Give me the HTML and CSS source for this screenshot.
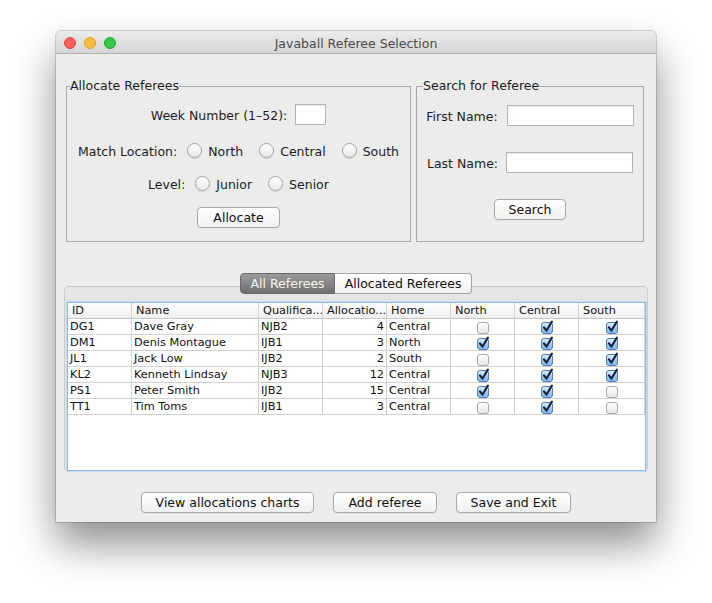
FILE: index.html
```html
<!DOCTYPE html>
<html lang="en">
<head>
<meta charset="utf-8">
<title>Javaball Referee Selection</title>
<link rel="stylesheet" href="styles.css">
</head>
<body>
<svg class="defs" width="0" height="0" aria-hidden="true">
  <defs>
    <linearGradient id="gOn" x1="0" y1="0" x2="0" y2="1">
      <stop offset="0" stop-color="#e2f0fe"/>
      <stop offset="0.5" stop-color="#a8cff7"/>
      <stop offset="1" stop-color="#7db6ef"/>
    </linearGradient>
    <linearGradient id="gOff" x1="0" y1="0" x2="0" y2="1">
      <stop offset="0" stop-color="#ffffff"/>
      <stop offset="1" stop-color="#e6e6e6"/>
    </linearGradient>
    <symbol id="cb-on" viewBox="0 0 14 14">
      <rect x="1.5" y="2.5" width="11" height="11" rx="2.5" fill="url(#gOn)" stroke="#5278ab"/>
      <path d="M3.9 7.4 L6.4 10.7 L11.9 1.6" fill="none" stroke="#17233b" stroke-width="2.1" stroke-linecap="round" stroke-linejoin="round"/>
    </symbol>
    <symbol id="cb-off" viewBox="0 0 14 14">
      <rect x="1.5" y="2.5" width="11" height="11" rx="2.5" fill="url(#gOff)" stroke="#a8a8a8"/>
    </symbol>
  </defs>
</svg>
<div class="desk">
  <div class="window">
    <header class="titlebar">
      <div class="lights">
        <span class="light close"></span>
        <span class="light min"></span>
        <span class="light max"></span>
      </div>
      <div class="title">Javaball Referee Selection</div>
      <div></div>
    </header>
    <main class="content">
      <div class="panels">
        <fieldset class="group alloc">
          <legend>Allocate Referees</legend>
          <div class="row week">
            <span class="lbl">Week Number (1–52):</span>
            <span class="field week-field"></span>
          </div>
          <div class="row loc">
            <span class="lbl">Match Location:</span>
            <span class="opt"><span class="radio"></span>North</span>
            <span class="opt"><span class="radio"></span>Central</span>
            <span class="opt"><span class="radio"></span>South</span>
          </div>
          <div class="row level">
            <span class="lbl">Level:</span>
            <span class="opt"><span class="radio"></span>Junior</span>
            <span class="opt"><span class="radio"></span>Senior</span>
          </div>
          <button class="btn allocate">Allocate</button>
        </fieldset>
        <fieldset class="group search">
          <legend>Search for Referee</legend>
          <div class="row first">
            <span class="lbl">First Name:</span>
            <span class="field name-field"></span>
          </div>
          <div class="row last">
            <span class="lbl">Last Name:</span>
            <span class="field name-field"></span>
          </div>
          <button class="btn search-btn">Search</button>
        </fieldset>
      </div>

      <div class="tabs">
        <span class="tab active">All Referees</span>
        <span class="tab">Allocated Referees</span>
      </div>
      <div class="tabpane">
        <div class="scroll">
          <table class="grid">
            <colgroup>
              <col class="c-id"><col class="c-name"><col class="c-q"><col class="c-a"><col class="c-h"><col class="c-n"><col class="c-c"><col class="c-s">
            </colgroup>
            <thead>
              <tr><th>ID</th><th>Name</th><th>Qualifica...</th><th>Allocatio...</th><th>Home</th><th>North</th><th>Central</th><th>South</th></tr>
            </thead>
            <tbody>
              <tr><td>DG1</td><td>Dave Gray</td><td>NJB2</td><td class="num">4</td><td>Central</td>
                <td class="cb"><svg><use href="#cb-off"/></svg></td><td class="cb"><svg><use href="#cb-on"/></svg></td><td class="cb"><svg><use href="#cb-on"/></svg></td></tr>
              <tr><td>DM1</td><td>Denis Montague</td><td>IJB1</td><td class="num">3</td><td>North</td>
                <td class="cb"><svg><use href="#cb-on"/></svg></td><td class="cb"><svg><use href="#cb-on"/></svg></td><td class="cb"><svg><use href="#cb-on"/></svg></td></tr>
              <tr><td>JL1</td><td>Jack Low</td><td>IJB2</td><td class="num">2</td><td>South</td>
                <td class="cb"><svg><use href="#cb-off"/></svg></td><td class="cb"><svg><use href="#cb-on"/></svg></td><td class="cb"><svg><use href="#cb-on"/></svg></td></tr>
              <tr><td>KL2</td><td>Kenneth Lindsay</td><td>NJB3</td><td class="num">12</td><td>Central</td>
                <td class="cb"><svg><use href="#cb-on"/></svg></td><td class="cb"><svg><use href="#cb-on"/></svg></td><td class="cb"><svg><use href="#cb-on"/></svg></td></tr>
              <tr><td>PS1</td><td>Peter Smith</td><td>IJB2</td><td class="num">15</td><td>Central</td>
                <td class="cb"><svg><use href="#cb-on"/></svg></td><td class="cb"><svg><use href="#cb-on"/></svg></td><td class="cb"><svg><use href="#cb-off"/></svg></td></tr>
              <tr><td>TT1</td><td>Tim Toms</td><td>IJB1</td><td class="num">3</td><td>Central</td>
                <td class="cb"><svg><use href="#cb-off"/></svg></td><td class="cb"><svg><use href="#cb-on"/></svg></td><td class="cb"><svg><use href="#cb-off"/></svg></td></tr>
            </tbody>
          </table>
        </div>
      </div>

      <div class="actions">
        <button class="btn">View allocations charts</button>
        <button class="btn">Add referee</button>
        <button class="btn">Save and Exit</button>
      </div>
    </main>
  </div>
</div>
</body>
</html>
```

FILE: styles.css
```css
* { box-sizing: border-box; }

html, body {
  margin: 0;
  padding: 0;
  background: #ffffff;
}

body {
  font-family: "DejaVu Sans", "Liberation Sans", sans-serif;
  font-size: 12.5px;
  color: #1c1c1c;
}

.defs { display: block; width: 0; height: 0; overflow: hidden; }

.desk {
  padding: 31px 0 0 56px;
  height: 603px;
}

.window {
  width: 600px;
  height: 491px;
  background: #ececec;
  border-radius: 5px 5px 0 0;
  box-shadow: 0 0 0 1px rgba(0, 0, 0, 0.16), 0 22px 42px rgba(0, 0, 0, 0.45);
  display: flex;
  flex-direction: column;
}

/* title bar */
.titlebar {
  height: 23px;
  flex: none;
  display: grid;
  grid-template-columns: 1fr auto 1fr;
  align-items: center;
  background: linear-gradient(#ececec, #d5d5d5);
  border-bottom: 1px solid #b2b2b2;
  border-radius: 5px 5px 0 0;
}
.lights { display: flex; gap: 8px; padding-left: 8px; }
.light { width: 12px; height: 12px; border-radius: 50%; }
.close { background: #fc605c; border: 1px solid #e0443e; }
.min { background: #fdbc40; border: 1px solid #dea123; }
.max { background: #34c84a; border: 1px solid #1aab29; }
.title { color: #4b4b4b; font-size: 12.5px; line-height: 22px; padding-top: 2px; }

/* content */
.content {
  flex: 1;
  display: flex;
  flex-direction: column;
  padding: 24px 0 9px 0;
}

.panels {
  display: flex;
  gap: 5px;
  height: 164px;
  padding-left: 10px;
}

.group {
  margin: 0;
  padding: 0;
  min-width: 0;
  border: 1px solid #a9a9a9;
  display: flex;
  flex-direction: column;
  align-items: center;
}
.group legend {
  margin-left: 3px;
  padding: 0;
  line-height: 16px;
  font-size: 12.5px;
  color: #1c1c1c;
}
.alloc { width: 345px; }
.search { width: 228px; }
.search legend { margin-left: 6px; }

.row {
  display: flex;
  align-items: center;
  height: 21px;
  white-space: nowrap;
}
.lbl { margin-right: 10px; }
.week .lbl { margin-right: 8px; }
.alloc .week { margin-top: 10px; }
.alloc .loc { margin-top: 15px; }
.alloc .level { margin-top: 12px; }
.alloc .allocate { margin-top: 13px; }
.row .lbl, .row .opt { padding-top: 1px; }

.opt { display: flex; align-items: center; }
.opt + .opt { margin-left: 16px; }

.radio {
  width: 15px;
  height: 15px;
  border-radius: 50%;
  border: 1px solid #a2a2a2;
  background: linear-gradient(#ffffff, #e9e9e9);
  box-shadow: 0 1px 1px rgba(0, 0, 0, 0.1);
  margin-right: 6px;
  margin-top: -1px;
}

.field {
  display: block;
  height: 21px;
  background: #ffffff;
  border: 1px solid #b3b3b3;
  box-shadow: inset 0 1px 1px rgba(0, 0, 0, 0.08);
}
.week-field { width: 31px; }
.name-field { width: 127px; }

.search .first { margin-top: 11px; }
.search .first .lbl { margin-right: 9px; }
.search .last { margin-top: 26px; }
.search .last .lbl { margin-right: 8px; }
.search .search-btn { margin-top: 26px; }

.btn {
  height: 21px;
  padding: 0 14px;
  font-family: "DejaVu Sans", "Liberation Sans", sans-serif;
  font-size: 12.5px;
  color: #111111;
  background: linear-gradient(#ffffff, #f0f0f0);
  border: 1px solid #a8a8a8;
  border-radius: 4px;
  box-shadow: 0 1px 0 rgba(0, 0, 0, 0.04);
  white-space: nowrap;
}
.allocate { padding: 0 15px; }

/* tabs */
.tabs {
  margin-top: 31px;
  margin-bottom: -8px;
  display: flex;
  justify-content: center;
  height: 21px;
  position: relative;
  z-index: 1;
}
.tab {
  height: 21px;
  line-height: 19px;
  padding: 0 9.5px;
  font-size: 12.5px;
  color: #111111;
  background: linear-gradient(#ffffff, #f1f1f1);
  border: 1px solid #a2a2a2;
  border-left: none;
  border-radius: 0 4px 4px 0;
}
.tab.active {
  color: #f4f4f4;
  background: linear-gradient(#9a9a9a, #6f6f6f);
  border: 1px solid #6a6a6a;
  border-radius: 4px 0 0 4px;
}

.tabpane {
  margin-left: 8px;
  width: 584px;
  height: 186px;
  border: 1px solid #cacaca;
  border-radius: 5px;
  background: #e5e5e5;
  padding: 15px 1px 1px 2px;
}

.scroll {
  width: 579px;
  height: 169px;
  background: #ffffff;
  border: 1px solid #8fb8e8;
  box-shadow: 0 0 0 1px #c6dcf4;
  overflow: hidden;
}

.grid {
  border-collapse: separate;
  border-spacing: 0;
  table-layout: fixed;
  width: 577px;
  font-size: 11.3px;
  color: #111111;
}
.c-id { width: 64px; }
.c-name { width: 127px; }
.c-q, .c-a, .c-h, .c-n, .c-c { width: 64px; }
.c-s { width: 66px; }

.grid th {
  height: 16px;
  padding: 1px 4px 0 4px;
  font-weight: normal;
  text-align: left;
  line-height: 14px;
  background: linear-gradient(#ffffff, #efefef);
  border-bottom: 1px solid #c6c6c6;
  border-right: 1px solid #d2d2d2;
  white-space: nowrap;
  overflow: hidden;
}
.grid td {
  height: 16px;
  padding: 1px 2px 0 2px;
  line-height: 14px;
  border-bottom: 1px solid #d0d0d0;
  border-right: 1px solid #d0d0d0;
  white-space: nowrap;
  overflow: hidden;
}
.grid td.num { text-align: right; }
.grid td.cb { padding-top: 0; }
.grid td.cb svg {
  display: block;
  width: 14px;
  height: 14px;
  margin: 0 auto;
}

/* bottom buttons */
.actions {
  margin-top: 20px;
  display: flex;
  justify-content: center;
  gap: 19px;
}
```
